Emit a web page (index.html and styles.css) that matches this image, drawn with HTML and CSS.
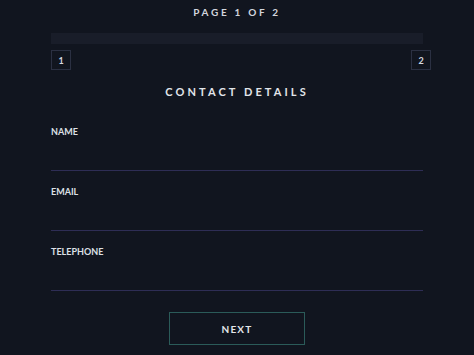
FILE: index.html
```html
<!DOCTYPE html>
<html lang="en">
<head>
    <meta charset="UTF-8">
    <meta name="viewport" content="width=device-width, initial-scale=1.0">
    <title>Contact Details</title>
    <link rel="stylesheet" href="styles.css">
</head>
<body>
    <div class="wizard">
        <div class="page-count">Page 1 of 2</div>

        <div class="progress"><div class="progress-fill"></div></div>

        <div class="steps">
            <span class="step current">1</span>
            <span class="step">2</span>
        </div>

        <h2>Contact Details</h2>

        <form class="form">
            <div class="form-group">
                <label for="name">Name</label>
                <input type="text" id="name" name="name">
            </div>

            <div class="form-group">
                <label for="email">Email</label>
                <input type="email" id="email" name="email">
            </div>

            <div class="form-group">
                <label for="phone">Telephone</label>
                <input type="tel" id="phone" name="phone">
            </div>

            <div class="actions">
                <button type="button" class="next">Next</button>
            </div>
        </form>
    </div>
</body>
</html>
```

FILE: styles.css
```css
body {
    margin: 0;
    background: #11151f;
    color: #dfe2e8;
    font-family: Lato, "Open Sans", sans-serif;
}

.wizard {
    padding: 5px 51px 0;
}

.page-count {
    text-align: center;
    font-size: 10px;
    font-weight: 700;
    letter-spacing: 2.7px;
    text-transform: uppercase;
    line-height: 14px;
    color: #d3d6de;
}

.progress {
    margin-top: 14px;
    height: 11px;
    background: #191d29;
}

.progress-fill {
    width: 0;
    height: 100%;
}

.steps {
    display: flex;
    justify-content: space-between;
    margin-top: 6px;
    margin-right: -8px;
}

.step {
    width: 18px;
    height: 18px;
    border: 1px solid #2b3042;
    display: flex;
    align-items: center;
    justify-content: center;
    font-size: 9px;
    font-weight: 700;
    color: #d6d9e0;
}

h2 {
    margin: 14px 0 0;
    text-align: center;
    font-size: 11px;
    font-weight: 700;
    letter-spacing: 3.1px;
    text-transform: uppercase;
    line-height: 16px;
    color: #e2e5ea;
}

.form {
    margin-top: 26px;
}

.form-group {
    margin-bottom: 15px;
}

label {
    display: block;
    font-size: 9px;
    font-weight: 700;
    line-height: 12px;
    text-transform: uppercase;
    color: #dde0e6;
}

input {
    display: block;
    width: 100%;
    height: 32px;
    margin-top: 1px;
    padding: 0;
    border: none;
    border-bottom: 1px solid #2e2d55;
    background: transparent;
    color: #dfe2e8;
    font-family: inherit;
    font-size: 12px;
    box-sizing: border-box;
    outline: none;
}

.actions {
    display: flex;
    justify-content: center;
    margin-top: 21px;
}

.next {
    width: 136px;
    height: 33px;
    background: transparent;
    border: 1px solid #2b5b59;
    color: #e3e6ea;
    font-family: inherit;
    font-size: 10px;
    font-weight: 700;
    letter-spacing: 1.2px;
    text-transform: uppercase;
    cursor: pointer;
}
```
